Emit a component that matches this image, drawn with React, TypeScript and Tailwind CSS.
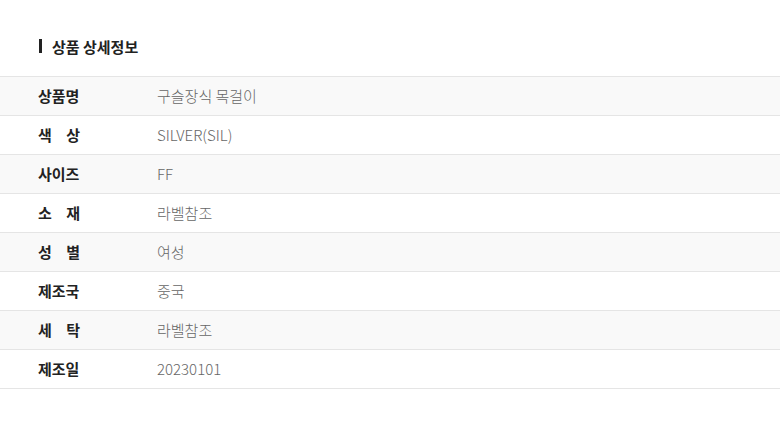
const rows: { label: string[]; value: string }[] = [
  { label: ["상품명"], value: "구슬장식 목걸이" },
  { label: ["색", "상"], value: "SILVER(SIL)" },
  { label: ["사이즈"], value: "FF" },
  { label: ["소", "재"], value: "라벨참조" },
  { label: ["성", "별"], value: "여성" },
  { label: ["제조국"], value: "중국" },
  { label: ["세", "탁"], value: "라벨참조" },
  { label: ["제조일"], value: "20230101" },
];

export default function App() {
  return (
    <div
      className="w-[780px] h-[427px] bg-white text-[15px]"
      style={{ fontFamily: '"Noto Sans CJK KR", "Noto Sans", sans-serif' }}
    >
      {/* Section title */}
      <div className="flex items-center h-[76px] pl-[39px] pt-[16px]">
        <span className="w-[3px] h-[14px] bg-[#222]" />
        <h2 className="ml-[10px] font-bold text-[#222] text-[15px] leading-none">상품 상세정보</h2>
      </div>

      {/* Detail rows */}
      <div className="border-b border-[#e5e5e5]">
        {rows.map((row, i) => (
          <div
            key={i}
            className={`flex items-center h-[39px] border-t border-[#e5e5e5] ${i % 2 === 0 ? "bg-[#f9f9f9]" : "bg-white"}`}
          >
            <div className="w-[157px] pl-[38px] shrink-0">
              <div className="flex justify-between w-[42px] font-bold text-[#222]">
                {row.label.map((l) => (
                  <span key={l}>{l}</span>
                ))}
              </div>
            </div>
            <div className="text-[#666] font-light">{row.value}</div>
          </div>
        ))}
      </div>
    </div>
  );
}
